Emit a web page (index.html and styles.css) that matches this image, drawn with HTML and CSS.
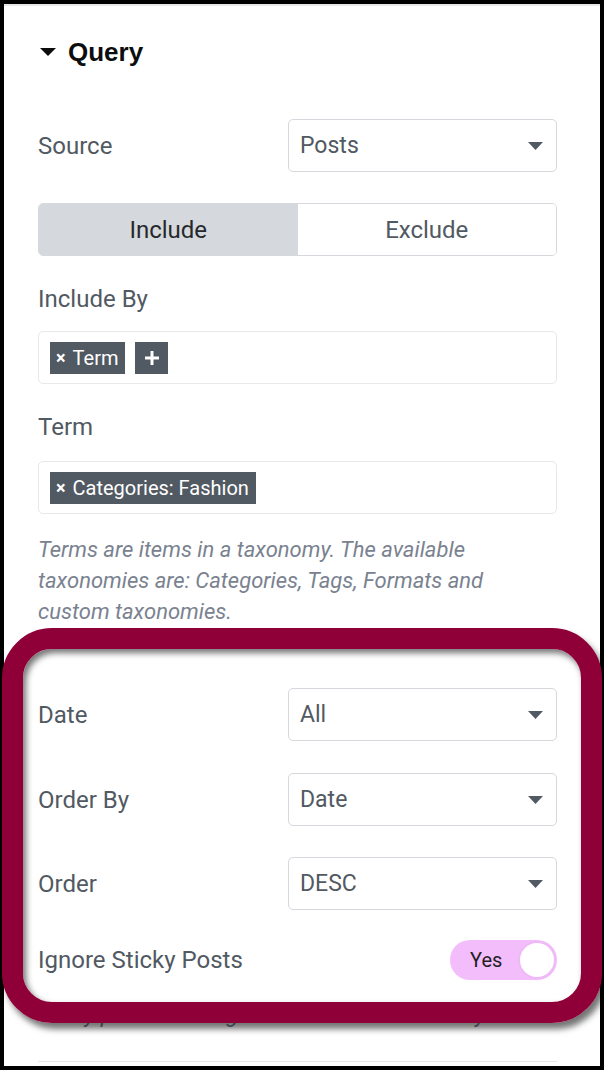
FILE: index.html
```html
<!DOCTYPE html>
<html>
<head>
<meta charset="utf-8">
<link rel="stylesheet" href="styles.css">
</head>
<body>
<div class="panel">
  <div class="heading">
    <svg class="caret" width="16" height="8" viewBox="0 0 16 8"><path d="M0 0H16L8 8Z" fill="#0c0d0e"/></svg>
    <span>Query</span>
  </div>

  <div class="row row-source">
    <span class="label">Source</span>
    <div class="select"><span>Posts</span><svg width="15" height="8" viewBox="0 0 15 8"><path d="M0 0H15L7.5 8Z" fill="#515962"/></svg></div>
  </div>

  <div class="switcher">
    <div class="sw-opt active">Include</div>
    <div class="sw-opt">Exclude</div>
  </div>

  <div class="label block l-incby">Include By</div>
  <div class="tags-input ti-incby">
    <span class="tag"><span class="x">×</span>Term</span>
    <span class="tag plus"><svg width="14" height="14" viewBox="0 0 14 14"><path d="M7 0V14M0 7H14" stroke="#fff" stroke-width="3"/></svg></span>
  </div>

  <div class="label block l-term">Term</div>
  <div class="tags-input ti-term">
    <span class="tag"><span class="x">×</span>Categories: Fashion</span>
  </div>

  <p class="help help-term">Terms are items in a taxonomy. The available taxonomies are: Categories, Tags, Formats and custom taxonomies.</p>

  <div class="row row-date">
    <span class="label">Date</span>
    <div class="select"><span>All</span><svg width="15" height="8" viewBox="0 0 15 8"><path d="M0 0H15L7.5 8Z" fill="#515962"/></svg></div>
  </div>
  <div class="row row-orderby">
    <span class="label">Order By</span>
    <div class="select"><span>Date</span><svg width="15" height="8" viewBox="0 0 15 8"><path d="M0 0H15L7.5 8Z" fill="#515962"/></svg></div>
  </div>
  <div class="row row-order">
    <span class="label">Order</span>
    <div class="select"><span>DESC</span><svg width="15" height="8" viewBox="0 0 15 8"><path d="M0 0H15L7.5 8Z" fill="#515962"/></svg></div>
  </div>
  <div class="row row-sticky">
    <span class="label">Ignore Sticky Posts</span>
    <div class="toggle"><span class="toggle-text">Yes</span><span class="knob"></span></div>
  </div>
  <p class="help help-sticky">Sticky-posts ordering is visible on frontend only</p>
  <div class="separator"></div>
</div>
<div class="highlight"></div>
</body>
</html>
```

FILE: styles.css
```css
html, body {
  margin: 0;
  padding: 0;
}
body {
  background: #000;
  width: 604px;
  height: 1070px;
  position: relative;
  overflow: hidden;
  font-family: Roboto, "Liberation Sans", sans-serif;
}
.panel {
  margin: 4px;
  height: 1062px;
  box-sizing: border-box;
  background: #fff;
  border-top: 2px solid #e6e8ea;
  padding: 31px 43px 0 34px;
  overflow: hidden;
}
.heading {
  display: flex;
  align-items: center;
  height: 30px;
  line-height: 30px;
  font-family: "Liberation Sans", Arial, sans-serif;
  font-weight: bold;
  font-size: 26px;
  color: #0c0d0e;
}
.caret {
  margin-left: 2px;
  margin-right: 12px;
}
.row {
  display: flex;
  justify-content: space-between;
  align-items: center;
}
.label {
  font-size: 24px;
  line-height: 28px;
  color: #515962;
}
.block {
  display: block;
}
.select {
  box-sizing: border-box;
  width: 269px;
  height: 53px;
  border: 1px solid #d5d8dc;
  border-radius: 5px;
  display: flex;
  align-items: center;
  justify-content: space-between;
  padding: 0 13px 0 11px;
  font-size: 23px;
  color: #515962;
}
.row-source { margin-top: 52px; }
.switcher {
  margin-top: 31px;
  height: 53px;
  box-sizing: border-box;
  border: 1px solid #d5d8dc;
  border-radius: 5px;
  display: flex;
  overflow: hidden;
}
.sw-opt {
  flex: 1;
  display: flex;
  align-items: center;
  justify-content: center;
  font-size: 24px;
  color: #515962;
  background: #fff;
}
.sw-opt.active {
  background: #d5d8dc;
  color: #26292c;
}
.l-incby { margin-top: 29px; }
.l-term { margin-top: 29px; }
.tags-input {
  box-sizing: border-box;
  height: 53px;
  border: 1px solid #e6e8ea;
  border-radius: 5px;
  display: flex;
  align-items: center;
  gap: 10px;
  padding: 0 11px;
}
.ti-incby { margin-top: 18px; }
.ti-term { margin-top: 20px; }
.tag {
  height: 32px;
  background: #515962;
  color: #fff;
  font-size: 20px;
  display: flex;
  align-items: center;
  padding: 0 7px 0 6px;
}
.tag .x {
  font-weight: bold;
  font-size: 18px;
  margin-right: 7px;
}
.tag.plus {
  width: 33px;
  padding: 0;
  justify-content: center;
}
.help {
  margin: 0;
  font-size: 22px;
  line-height: 31px;
  font-style: italic;
  color: #7a8290;
}
.help-term { margin-top: 20px; }
.row-date { margin-top: 61px; }
.row-orderby { margin-top: 32px; }
.row-order { margin-top: 31px; }
.row-sticky { margin-top: 30px; }
.toggle {
  position: relative;
  box-sizing: border-box;
  width: 107px;
  height: 40px;
  border-radius: 20px;
  background: #f3bdfb;
  display: flex;
  align-items: center;
  padding-left: 20px;
}
.toggle-text {
  font-size: 20px;
  color: #1f2124;
}
.knob {
  position: absolute;
  right: 1px;
  top: 1px;
  width: 34px;
  height: 34px;
  border-radius: 50%;
  background: #fff;
  border: 2px solid #f0b8f8;
}
.help-sticky { margin-top: 19px; }
.separator {
  margin-top: 31px;
  height: 1px;
  background: #e6e8ea;
}
.highlight {
  position: absolute;
  left: 2px;
  top: 628px;
  width: 600px;
  height: 395px;
  box-sizing: border-box;
  border: 21px solid #8f0039;
  border-radius: 50px;
  box-shadow: inset 3px 4px 6px rgba(0,0,0,0.55), 4px 6px 6px rgba(0,0,0,0.55);
}
```
